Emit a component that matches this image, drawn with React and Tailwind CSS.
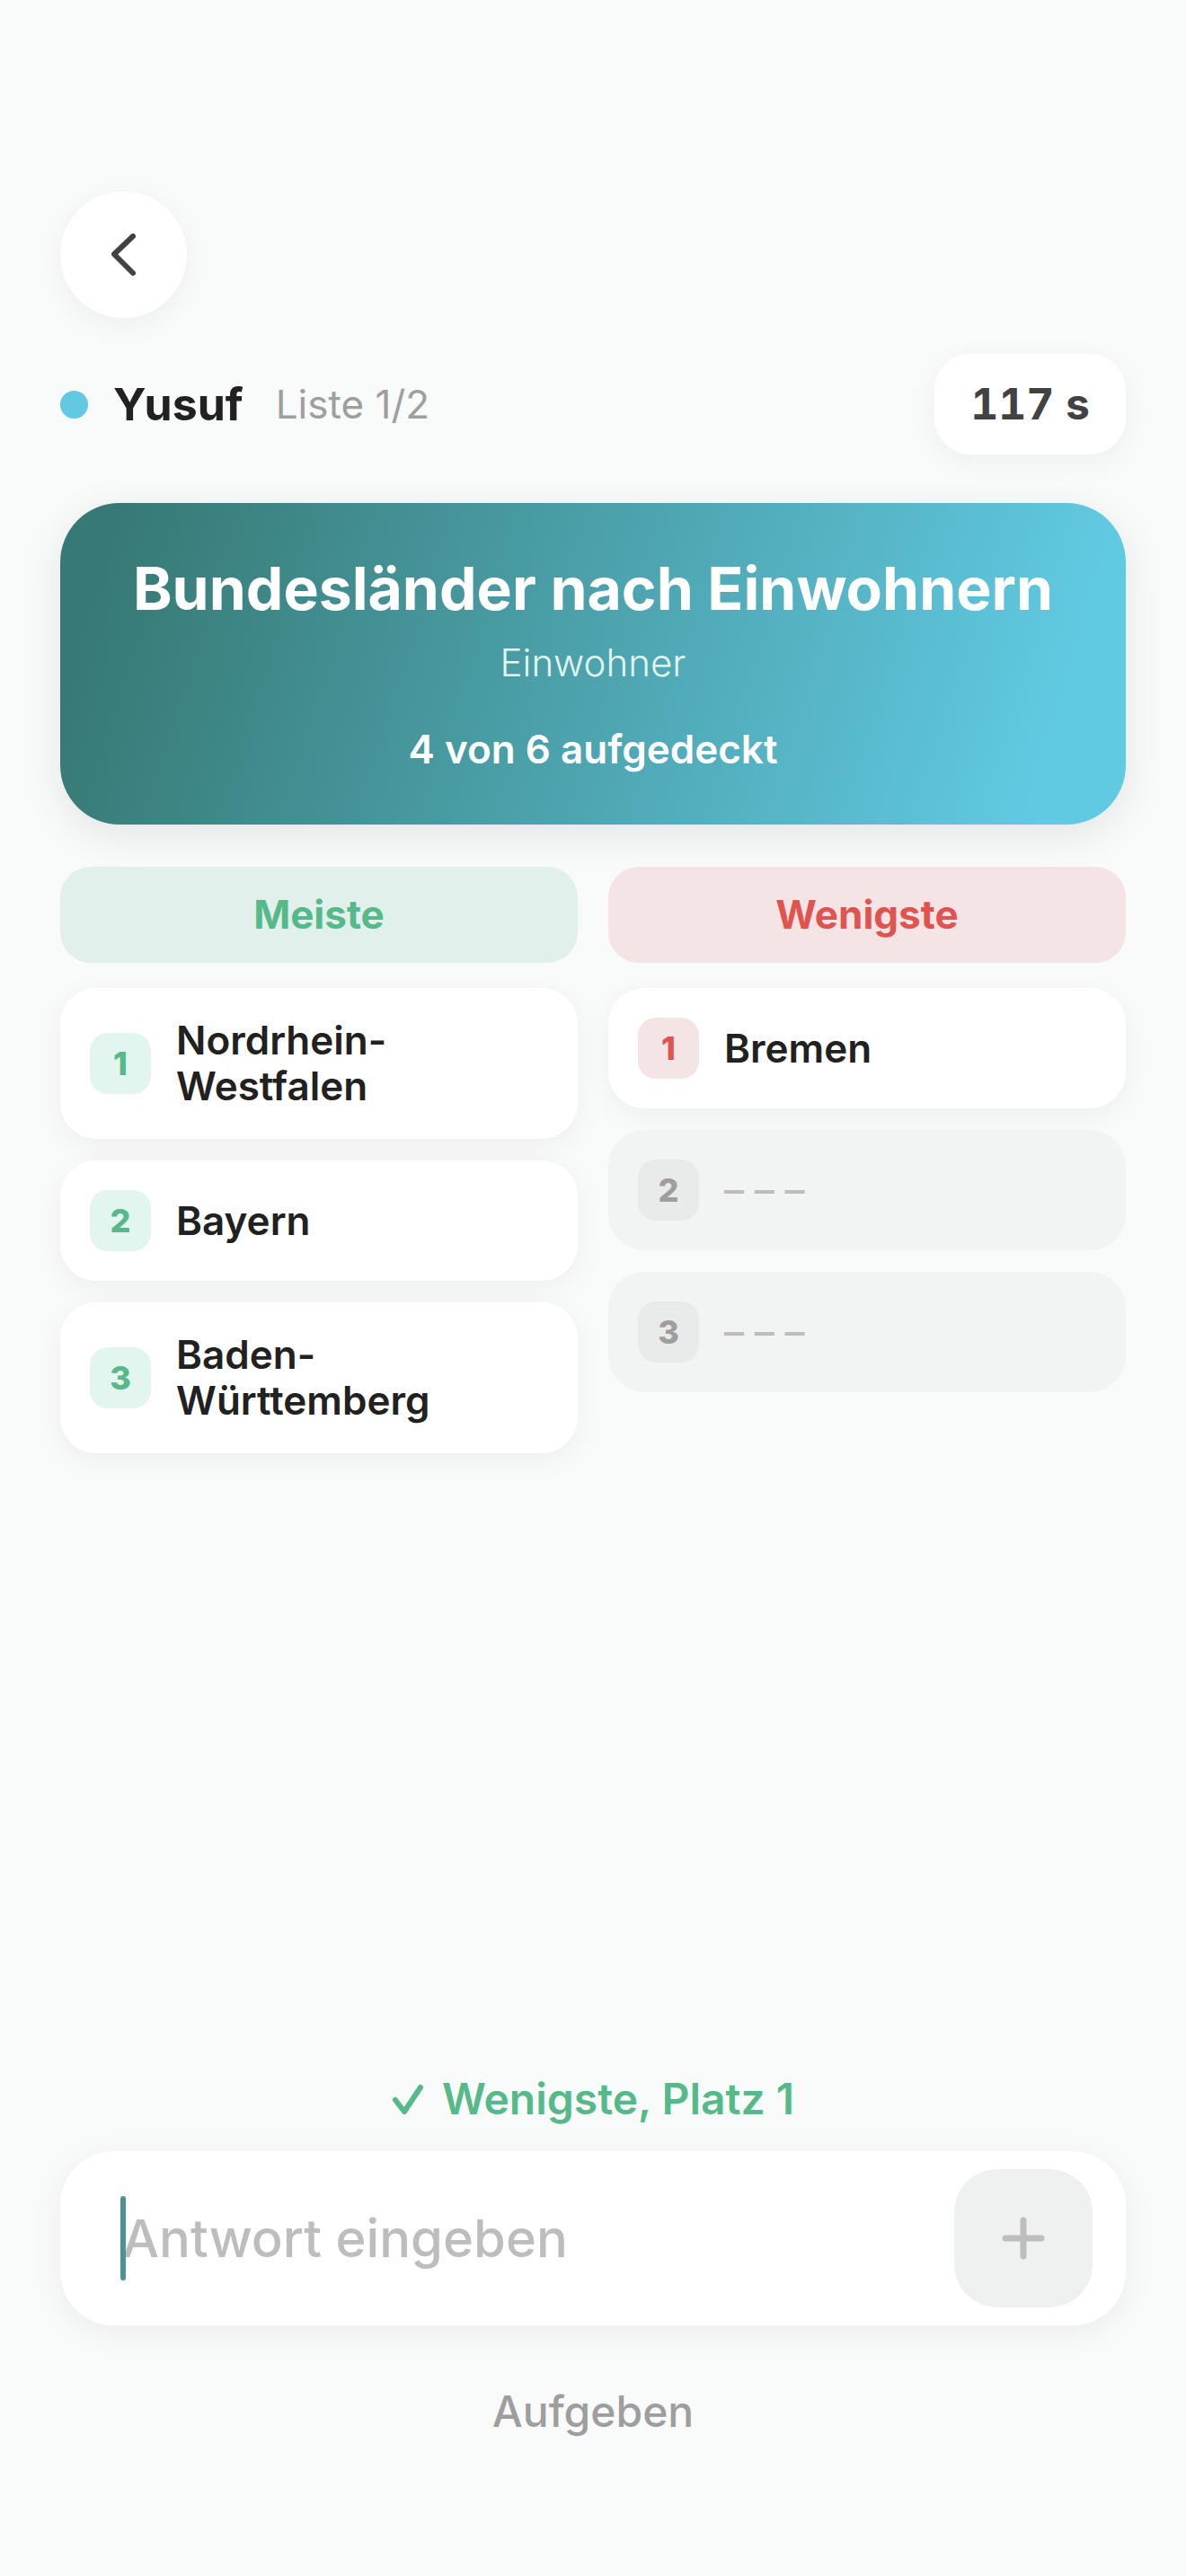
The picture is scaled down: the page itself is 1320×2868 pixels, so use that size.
import { useState } from 'react'

const most = ['Nordrhein-Westfalen', 'Bayern', 'Baden-Württemberg']
const least = ['Bremen', null, null]

const tones = {
  green: { head: 'bg-[#e1f0eb] text-[#56b989]', badge: 'bg-[#e2f5ee] text-[#56b989]' },
  red: { head: 'bg-[#f5e4e5] text-[#df544e]', badge: 'bg-[#f5e4e5] text-[#df544e]' },
}

function Slot({ rank, name, tone }) {
  return (
    <li
      className={`flex items-center gap-7 rounded-[40px] p-[33px] ${
        name ? 'bg-white shadow-[0_8px_32px_rgba(0,0,0,0.05)]' : 'bg-[#f2f4f3]'
      }`}
    >
      <span
        className={`flex size-[68px] shrink-0 items-center justify-center rounded-[20px] text-[36px] leading-none font-extrabold ${
          name ? tones[tone].badge : 'bg-[#e9ebea] text-[#9e9e9e]'
        }`}
      >
        {rank}
      </span>
      {name ? (
        <span className="max-w-[300px] text-[44px] leading-[51px] font-semibold text-[#212121]">{name}</span>
      ) : (
        <span className="text-[44px] leading-[51px] font-medium text-[#bdbdbd]">– – –</span>
      )}
    </li>
  )
}

function Column({ title, tone, items }) {
  return (
    <section>
      <h2 className={`rounded-[34px] py-7 text-center text-[44px] leading-[51px] font-bold ${tones[tone].head}`}>
        {title}
      </h2>
      <ol className="mt-7 flex flex-col gap-6">
        {items.map((name, i) => (
          <Slot key={i} rank={i + 1} name={name} tone={tone} />
        ))}
      </ol>
    </section>
  )
}

export default function App() {
  const [answer, setAnswer] = useState('')

  return (
    <main className="flex min-h-screen flex-col bg-[#f9fbfa] px-[67px] pt-[213px] pb-[153px] font-[Inter,'Liberation_Sans',sans-serif] text-[#212121]">
      <button
        type="button"
        aria-label="Zurück"
        className="flex size-[141px] items-center justify-center rounded-full bg-white shadow-[0_8px_32px_rgba(0,0,0,0.05)]"
      >
        <svg viewBox="0 0 48 48" className="size-12" fill="none" stroke="#424242" strokeWidth="6" strokeLinecap="round" strokeLinejoin="round">
          <path d="M34 3 13 23l21 21" />
        </svg>
      </button>

      <header className="mt-10 flex items-center">
        <span className="size-[31px] rounded-full bg-[#61c9e1]" />
        <span className="ml-7 text-[50px] leading-[60px] font-bold">Yusuf</span>
        <span className="ml-9 text-[44px] leading-[60px] text-[#9e9e9e]">Liste 1/2</span>
        <span className="ml-auto rounded-[40px] bg-white px-10 py-[26px] text-[48px] leading-[60px] font-bold text-[#424242] tabular-nums shadow-[0_8px_32px_rgba(0,0,0,0.05)]">
          117 s
        </span>
      </header>

      <div className="mt-[54px] flex flex-col items-center rounded-[66px] bg-[linear-gradient(107deg,#377974_5%,#61cae3_92%)] pt-14 pb-[58px] text-center text-white shadow-[0_12px_48px_rgba(0,0,0,0.09)]">
        <h1 className="text-[66px] leading-[78px] font-bold">Bundesländer nach Einwohnern</h1>
        <p className="mt-[18px] text-[42px] leading-[51px] font-light text-[#e2f5ee]">Einwohner</p>
        <p className="mt-[46px] text-[44px] leading-[51px] font-semibold">4 von 6 aufgedeckt</p>
      </div>

      <div className="mt-[47px] grid grid-cols-2 items-start gap-[34px]">
        <Column title="Meiste" tone="green" items={most} />
        <Column title="Wenigste" tone="red" items={least} />
      </div>

      <div className="mt-auto flex items-center justify-center gap-5 text-[48px] leading-[56px] font-semibold text-[#56b989]">
        <svg viewBox="0 0 36 36" className="size-9" fill="none" stroke="currentColor" strokeWidth="6" strokeLinecap="round" strokeLinejoin="round">
          <path d="M4 19l10 13L32 5" />
        </svg>
        <p>Wenigste, Platz 1</p>
      </div>

      <form
        className="mt-[30px] flex items-center rounded-[60px] bg-white py-5 pr-[37px] pl-[67px] shadow-[0_8px_36px_rgba(0,0,0,0.06)]"
        onSubmit={(e) => e.preventDefault()}
      >
        <div className="relative flex-1">
          <input
            aria-label="Antwort"
            placeholder="Antwort eingeben"
            value={answer}
            onChange={(e) => setAnswer(e.target.value)}
            className="w-full pl-[2px] text-[58px] leading-[94px] font-medium outline-none placeholder:text-[#bdbdbd]"
          />
          {!answer && <span className="absolute inset-y-0 left-0 w-[6px] rounded-full bg-[#4c929a]" />}
        </div>
        <button
          type="submit"
          aria-label="Hinzufügen"
          className="flex size-[154px] items-center justify-center rounded-[48px] bg-[#eff1f0]"
        >
          <svg viewBox="0 0 48 48" className="size-12" fill="none" stroke="#bdbdbd" strokeWidth="7" strokeLinecap="round">
            <path d="M24 4v40M4 24h40" />
          </svg>
        </button>
      </form>

      <button type="button" className="mt-[66px] self-center text-[48px] leading-[60px] font-medium text-[#9e9e9e]">
        Aufgeben
      </button>
    </main>
  )
}
